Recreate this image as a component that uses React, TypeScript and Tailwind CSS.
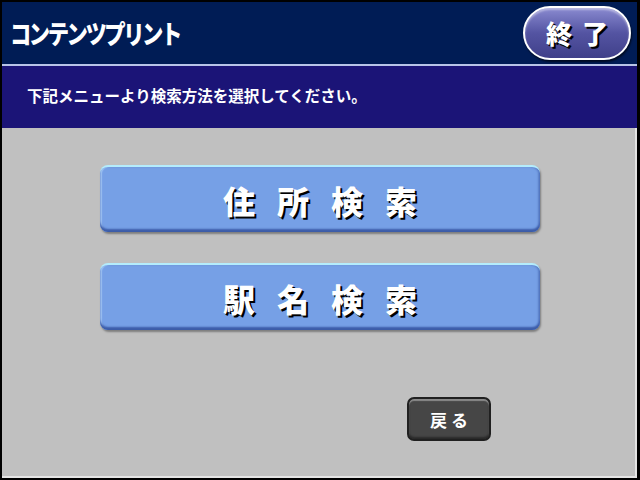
const jp = "font-['Noto_Sans_CJK_JP','Noto_Sans',sans-serif]";

export default function App() {
  return (
    <div className={`w-[640px] h-[480px] bg-black p-[2px] pr-[3px] ${jp}`}>
      <div className="w-full h-full flex flex-col bg-[#c0c0c0]">
        {/* Header */}
        <div className="h-[62px] bg-[#001c55] flex items-center justify-between pl-[8px] pr-[6px]">
          <span className="text-white font-black text-[26px] tracking-[-3px] leading-none scale-x-[0.82] origin-left">
            コンテンツプリント
          </span>
          <button className="w-[108px] h-[54px] rounded-full border-2 border-white bg-gradient-to-b from-[#8a8ad0] via-[#5454a2] to-[#40408a] shadow-[inset_0_2px_2px_rgba(255,255,255,0.4),1px_2px_2px_rgba(0,0,0,0.6)] flex items-center justify-center">
            <span className="text-white font-black text-[26px] tracking-[10px] pl-[10px] leading-none [text-shadow:2px_2px_0_#000]">
              終了
            </span>
          </button>
        </div>
        <div className="h-[2px] bg-[#b8c4e8]" />
        {/* Instruction bar */}
        <div className="h-[62px] bg-[#1b1477] flex items-center pl-[25px] pb-[2px]">
          <span className="text-white font-bold text-[15.5px] leading-none">
            下記メニューより検索方法を選択してください。
          </span>
        </div>
        {/* Body */}
        <div className="flex-1 flex flex-col border-r-2 border-b-2 border-[#e4e4e4]">
          <div className="flex flex-col items-center gap-[31px] pt-[37px] pl-[3px]">
            {["住所検索", "駅名検索"].map((label) => (
              <button
                key={label}
                className="w-[440px] h-[67px] rounded-[8px] bg-[#76a0e6] border-t-2 border-[#b4ecfc] shadow-[inset_0_-3px_2px_#3c5ca8,inset_-2px_0_2px_#5c80c8,inset_2px_0_1px_#a0c4f4,1px_2px_2px_rgba(0,0,0,0.35)] flex items-center justify-center"
              >
                <span className="text-white font-black text-[32px] tracking-[22px] pl-[22px] leading-none [text-shadow:2px_2px_0_#000]">
                  {label}
                </span>
              </button>
            ))}
          </div>
          <div className="flex justify-end pr-[144px] pt-[67px]">
            <button className="w-[84px] h-[44px] rounded-[7px] border-2 border-[#202020] bg-[#464646] shadow-[inset_0_2px_1px_#8a8a8a,inset_0_-2px_2px_#2a2a2a] flex items-center justify-center">
              <span className="text-white font-bold text-[17px] tracking-[4px] pl-[4px] leading-none">
                戻る
              </span>
            </button>
          </div>
        </div>
      </div>
    </div>
  );
}
